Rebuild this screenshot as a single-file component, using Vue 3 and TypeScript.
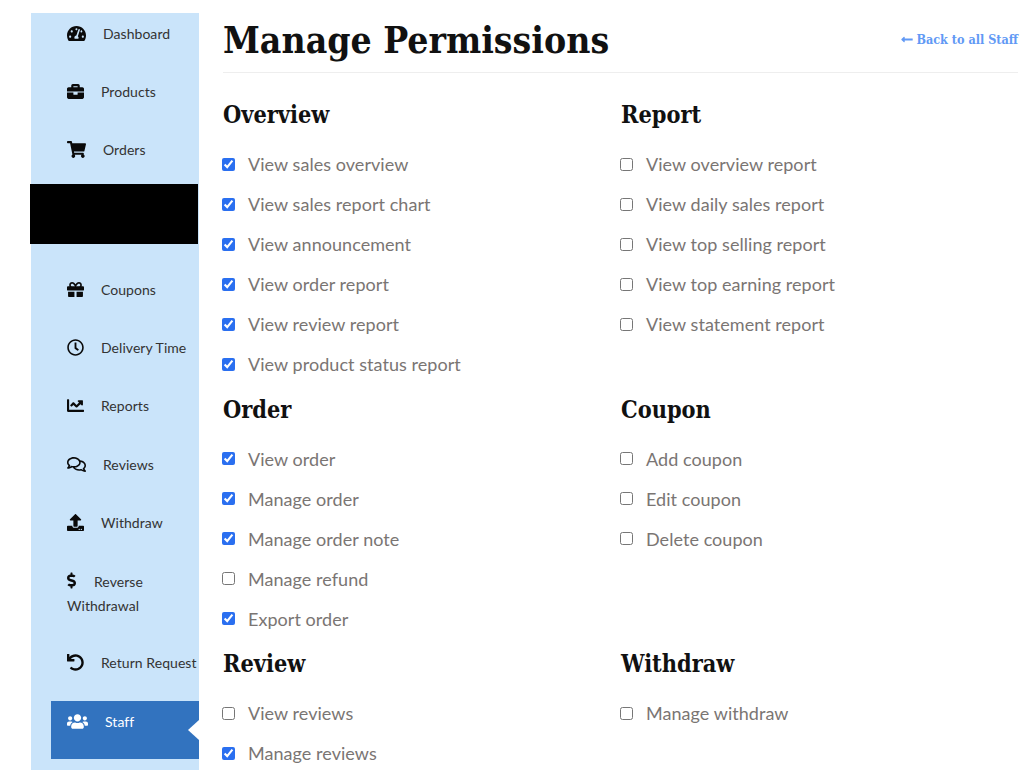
<script setup lang="ts">
interface NavItem {
  label: string
  vb: string
  d: string
  w: number
  cls?: string
}
interface Perm { label: string; on: boolean }
interface Group { title: string; perms: Perm[] }

const nav: NavItem[] = [
  { label: 'Dashboard', vb: '0 0 576 512', w: 19, d: 'M288 32C128.94 32 0 160.94 0 320c0 52.8 14.25 102.26 39.06 144.8 5.61 9.62 16.3 15.2 27.44 15.2h443c11.14 0 21.83-5.58 27.44-15.2C561.75 422.26 576 372.8 576 320c0-159.06-128.94-288-288-288zm0 64c14.71 0 26.58 10.13 30.32 23.65-1.11 2.26-2.64 4.23-3.45 6.67l-9.22 27.67c-5.13 3.49-10.97 6.01-17.64 6.01-17.67 0-32-14.33-32-32S270.33 96 288 96zM96 384c-17.67 0-32-14.33-32-32s14.33-32 32-32 32 14.33 32 32-14.33 32-32 32zm48-160c-17.67 0-32-14.33-32-32s14.33-32 32-32 32 14.33 32 32-14.33 32-32 32zm246.77-72.41l-61.33 184C343.13 347.33 352 364.54 352 384c0 11.72-3.38 22.55-8.88 32H232.88c-5.5-9.45-8.88-20.28-8.88-32 0-33.94 26.5-61.43 59.9-63.59l61.34-184.01c4.17-12.56 17.73-19.45 30.36-15.17 12.57 4.19 19.35 17.79 15.17 30.36zm14.66 57.2l15.52-46.55c3.47-1.29 7.13-2.23 11.05-2.23 17.67 0 32 14.33 32 32s-14.33 32-32 32c-11.38-.01-20.89-6.28-26.57-15.22zM480 384c-17.67 0-32-14.33-32-32s14.33-32 32-32 32 14.33 32 32-14.33 32-32 32z' },
  { label: 'Products', vb: '0 0 512 512', w: 17, d: 'M320 336c0 8.84-7.16 16-16 16h-96c-8.84 0-16-7.16-16-16v-48H0v144c0 25.6 22.4 48 48 48h416c25.6 0 48-22.4 48-48V288H320v48zm144-208h-80V80c0-25.6-22.4-48-48-48H176c-25.6 0-48 22.4-48 48v48H48c-25.6 0-48 22.4-48 48v80h512v-80c0-25.6-22.4-48-48-48zm-144 0H192V96h128v32z' },
  { label: 'Orders', vb: '0 0 576 512', w: 19, d: 'M528.12 301.319l47.273-208C578.806 78.301 567.391 64 551.99 64H159.208l-9.166-44.81C147.758 8.021 137.93 0 126.529 0H24C10.745 0 0 10.745 0 24v16c0 13.255 10.745 24 24 24h69.883l70.248 343.435C147.325 417.1 136 435.222 136 456c0 30.928 25.072 56 56 56s56-25.072 56-56c0-15.674-6.447-29.835-16.824-40h209.647C430.447 426.165 424 440.326 424 456c0 30.928 25.072 56 56 56s56-25.072 56-56c0-22.172-12.888-41.332-31.579-50.405l5.517-24.276c3.413-15.018-8.002-29.319-23.403-29.319H218.117l-6.545-32h293.145c11.206 0 20.92-7.754 23.403-18.681z' }
]
const navLower: NavItem[] = [
  { label: 'Coupons', vb: '0 0 512 512', w: 17, d: 'M32 448c0 17.7 14.3 32 32 32h160V320H32v128zm256 32h160c17.7 0 32-14.3 32-32V320H288v160zm192-320h-42.1c6.2-12.1 10.1-25.5 10.1-40 0-48.5-39.5-88-88-88-41.6 0-68.5 21.3-103 68.3-34.5-47-61.4-68.3-103-68.3-48.5 0-88 39.5-88 88 0 14.5 3.8 27.9 10.1 40H32c-17.7 0-32 14.3-32 32v80c0 8.8 7.2 16 16 16h480c8.8 0 16-7.2 16-16v-80c0-17.7-14.3-32-32-32zm-326.1 0c-22.1 0-40-17.9-40-40s17.9-40 40-40c19.9 0 34.6 3.3 86.1 80h-86.1zm206.1 0h-86.1c51.4-76.5 65.7-80 86.1-80 22.1 0 40 17.9 40 40s-17.9 40-40 40z' },
  { label: 'Delivery Time', vb: '0 0 512 512', w: 17, d: 'M256 8C119 8 8 119 8 256s111 248 248 248 248-111 248-248S393 8 256 8zm0 448c-110.5 0-200-89.5-200-200S145.5 56 256 56s200 89.5 200 200-89.5 200-200 200zm61.8-104.4l-84.9-61.7c-3.1-2.3-4.9-5.9-4.9-9.7V116c0-6.6 5.4-12 12-12h32c6.6 0 12 5.4 12 12v141.7l66.8 48.6c5.4 3.9 6.5 11.4 2.6 16.8L334.6 349c-3.9 5.3-11.4 6.5-16.8 2.6z' },
  { label: 'Reports', vb: '0 0 512 512', w: 17, d: 'M496 384H64V80c0-8.84-7.16-16-16-16H16C7.16 64 0 71.16 0 80v336c0 17.67 14.33 32 32 32h464c8.84 0 16-7.16 16-16v-32c0-8.84-7.16-16-16-16zM464 96H345.94c-21.38 0-32.09 25.85-16.97 40.97l32.4 32.4L288 242.75l-73.37-73.37c-12.5-12.5-32.76-12.5-45.25 0l-68.69 68.69c-6.25 6.25-6.25 16.38 0 22.63l22.62 22.62c6.25 6.25 16.38 6.25 22.63 0L192 237.25l73.37 73.37c12.5 12.5 32.76 12.5 45.25 0l96-96 32.4 32.4c15.12 15.12 40.97 4.41 40.97-16.97V112c.01-8.84-7.15-16-15.99-16z' },
  { label: 'Reviews', vb: '0 0 576 512', w: 19, d: 'M532 386.2c27.5-27.1 44-61.1 44-98.2 0-80-76.5-146.1-176.2-157.9C368.3 72.5 294.3 32 208 32 93.1 32 0 103.6 0 192c0 37 16.5 71 44 98.2-15.3 30.7-37.3 54.5-37.7 54.9-6.3 6.7-8.1 16.5-4.4 25 3.6 8.5 12 14 21.2 14 53.5 0 96.7-20.2 125.2-38.8 9.2 2.1 18.7 3.7 28.4 4.9C208.1 407.6 281.8 448 368 448c20.8 0 40.8-2.4 59.8-6.8C456.3 459.7 499.4 480 553 480c9.2 0 17.5-5.5 21.2-14 3.6-8.5 1.9-18.3-4.4-25-.4-.3-22.5-24.1-37.8-54.8zm-392.8-92.3L122.1 305c-14.1 9.1-28.5 16.3-43.1 21.4 2.7-4.7 5.4-9.7 8-14.8l15.5-31.1L77.7 256C64.2 242.6 48 220.7 48 192c0-60.7 73.3-112 160-112s160 51.3 160 112-73.3 112-160 112c-16.5 0-33-1.9-49-5.6l-19.8-4.5zM498.3 352l-24.7 24.4 15.5 31.1c2.6 5.1 5.3 10.1 8 14.8-14.6-5.1-29-12.3-43.1-21.4l-17.1-11.1-19.9 4.6c-16 3.7-32.5 5.6-49 5.6-54 0-102.2-20.1-131.3-49.7C338 339.5 416 272.9 416 192c0-3.4-.4-6.7-.7-10C479.7 196.5 528 238.8 528 288c0 28.7-16.2 50.6-29.7 64z' },
  { label: 'Withdraw', vb: '0 0 512 512', w: 17, d: 'M296 384h-80c-13.3 0-24-10.7-24-24V192h-87.7c-17.8 0-26.7-21.5-14.1-34.1L242.3 5.7c7.5-7.5 19.8-7.5 27.3 0l152.2 152.2c12.6 12.6 3.7 34.1-14.1 34.1H320v168c0 13.3-10.7 24-24 24zm216-8v112c0 13.3-10.7 24-24 24H24c-13.3 0-24-10.7-24-24V376c0-13.3 10.7-24 24-24h136v8c0 30.9 25.1 56 56 56h80c30.9 0 56-25.1 56-56v-8h136c13.3 0 24 10.7 24 24zm-124 88c0-11-9-20-20-20s-20 9-20 20 9 20 20 20 20-9 20-20zm64 0c0-11-9-20-20-20s-20 9-20 20 9 20 20 20 20-9 20-20z' },
  { label: 'Reverse Withdrawal', vb: '0 0 320 512', w: 10, cls: 'two-line', d: 'M209.2 233.4l-108-31.6C88.7 198.2 80 186.5 80 173.5c0-16.3 13.2-29.5 29.5-29.5h66.3c12.2 0 24.2 3.7 34.2 10.5 6.1 4.1 14.3 3.1 19.5-2l34.8-34c7.1-6.9 6.1-18.4-1.8-24.5C238 74.8 207.4 64.1 176 64V16c0-8.8-7.2-16-16-16h-32c-8.8 0-16 7.2-16 16v48h-2.5C45.8 64-5.4 118.7.5 183.6c4.2 46.1 39.4 83.6 83.8 96.6l102.5 30c12.5 3.7 21.2 15.3 21.2 28.3 0 16.3-13.2 29.5-29.5 29.5h-66.3C100 368 88 364.3 78 357.5c-6.1-4.1-14.3-3.1-19.5 2l-34.8 34c-7.1 6.9-6.1 18.4 1.8 24.5 24.5 19.2 55.1 29.9 86.5 30v48c0 8.8 7.2 16 16 16h32c8.8 0 16-7.2 16-16v-48.2c46.6-.9 90.3-28.6 105.7-72.7 21.5-61.6-14.6-124.8-72.5-141.7z' },
  { label: 'Return Request', vb: '0 0 512 512', w: 17, d: 'M212.333 224.333H12c-6.627 0-12-5.373-12-12V12C0 5.373 5.373 0 12 0h48c6.627 0 12 5.373 12 12v78.112C117.773 39.279 184.26 7.47 258.175 8.007c136.906.994 246.448 111.623 246.157 248.532C504.041 393.258 393.12 504 256.333 504c-64.089 0-122.496-24.313-166.51-64.215-5.099-4.622-5.334-12.554-.467-17.42l33.967-33.967c4.474-4.474 11.662-4.717 16.401-.525C170.76 415.336 211.58 432 256.333 432c97.268 0 176-78.716 176-176 0-97.267-78.716-176-176-176-58.496 0-110.28 28.476-142.274 72.333h98.274c6.627 0 12 5.373 12 12v48c0 6.627-5.373 12-12 12z' }
]
const staffIcon = 'M96 224c35.3 0 64-28.7 64-64s-28.7-64-64-64-64 28.7-64 64 28.7 64 64 64zm448 0c35.3 0 64-28.7 64-64s-28.7-64-64-64-64 28.7-64 64 28.7 64 64 64zm32 32h-64c-17.6 0-33.5 7.1-45.1 18.6 40.3 22.1 68.9 62 75.1 109.4h66c17.7 0 32-14.3 32-32v-32c0-35.3-28.7-64-64-64zm-256 0c61.9 0 112-50.1 112-112S381.9 32 320 32 208 82.1 208 144s50.1 112 112 112zm76.8 32h-8.3c-20.8 10-43.9 16-68.5 16s-47.6-6-68.5-16h-8.3C179.6 288 128 339.6 128 403.2V432c0 26.5 21.5 48 48 48h288c26.5 0 48-21.5 48-48v-28.8c0-63.6-51.6-115.2-115.2-115.2zm-223.7-13.4C161.5 263.1 145.6 256 128 256H64c-35.3 0-64 28.7-64 64v32c0 17.7 14.3 32 32 32h65.9c6.3-47.4 34.9-87.3 75.2-109.4z'
const arrowIcon = 'M134.059 296H436c6.627 0 12-5.373 12-12v-56c0-6.627-5.373-12-12-12H134.059v-46.059c0-21.382-25.851-32.09-40.971-16.971L7.029 239.029c-9.373 9.373-9.373 24.569 0 33.941l86.059 86.059c15.119 15.119 40.971 4.411 40.971-16.971V296z'

const mk = (s: string): Perm[] => s.split('|').map((x) => {
  const off = x.startsWith('!')
  return { label: off ? x.slice(1) : x, on: !off }
})
const groups: Group[] = [
  { title: 'Overview', perms: mk('View sales overview|View sales report chart|View announcement|View order report|View review report|View product status report') },
  { title: 'Report', perms: mk('!View overview report|!View daily sales report|!View top selling report|!View top earning report|!View statement report') },
  { title: 'Order', perms: mk('View order|Manage order|Manage order note|!Manage refund|Export order') },
  { title: 'Coupon', perms: mk('!Add coupon|!Edit coupon|!Delete coupon') },
  { title: 'Review', perms: mk('!View reviews|Manage reviews') },
  { title: 'Withdraw', perms: mk('!Manage withdraw') }
]
</script>

<template>
  <div class="page">
    <aside class="sidebar">
      <a v-for="n in nav" :key="n.label" class="nav-item">
        <svg class="nav-icon" :viewBox="n.vb" :width="n.w" height="17" fill="currentColor"><path :d="n.d" /></svg>
        <span class="nav-label">{{ n.label }}</span>
      </a>
      <div class="redacted"></div>
      <a v-for="n in navLower" :key="n.label" class="nav-item lower" :class="n.cls">
        <svg class="nav-icon" :viewBox="n.vb" :width="n.w" height="17" fill="currentColor"><path :d="n.d" /></svg>
        <span class="nav-label">{{ n.label }}</span>
      </a>
      <a class="nav-item active">
        <svg class="nav-icon" viewBox="0 0 640 512" width="21" height="17" fill="currentColor"><path :d="staffIcon" /></svg>
        <span class="nav-label">Staff</span>
      </a>
    </aside>
    <main class="main">
      <header class="head">
        <h1>Manage Permissions</h1>
        <a class="back">
          <svg viewBox="0 0 448 512" width="12" height="13" fill="currentColor"><path :d="arrowIcon" /></svg>
          Back to all Staff
        </a>
      </header>
      <div class="grid">
        <section v-for="g in groups" :key="g.title" class="group">
          <h2>{{ g.title }}</h2>
          <label v-for="p in g.perms" :key="p.label" class="perm">
            <input type="checkbox" :checked="p.on" />
            <span>{{ p.label }}</span>
          </label>
        </section>
      </div>
    </main>
  </div>
</template>

<style>
html, body { margin: 0; background: #fff; overflow: hidden; }
</style>

<style scoped>
.page {
  display: flex;
  align-items: flex-start;
  height: 757px;
  padding: 13px 6px 0 31px;
  overflow: hidden;
  font-family: Lato, "Open Sans", sans-serif;
}
.sidebar {
  width: 168px;
  height: 757px;
  flex: none;
  background: #cae4fa;
  display: flex;
  flex-direction: column;
}
.nav-item {
  display: flex;
  align-items: center;
  box-sizing: border-box;
  height: 58.3px;
  padding: 0 0 18px 36px;
  color: #333;
  font-size: 14px;
  letter-spacing: 0.05px;
  white-space: nowrap;
}
.nav-item.lower { height: 58.4px; }
.nav-icon { flex: none; margin-right: 17px; color: #0a0a0a; }
.nav-item.two-line {
  display: block;
  height: 81.6px;
  padding: 9px 30px 0 36px;
  white-space: normal;
  line-height: 24px;
}
.two-line .nav-icon { vertical-align: -2px; }
.redacted {
  width: 168px;
  height: 60px;
  margin: -4px 0 25px -1px;
  background: #000;
  flex: none;
}
.nav-item.active {
  position: relative;
  margin-left: 20px;
  padding: 0 0 17px 16px;
  background: #3273bf;
  color: #fff;
}
.nav-item.active .nav-icon { color: #fff; }
.nav-item.active::after {
  content: "";
  position: absolute;
  right: 0;
  top: 19px;
  border: 10px solid transparent;
  border-left: 0;
  border-right: 11px solid #fff;
}
.main { flex: 1; margin-left: 24px; min-width: 0; }
.head {
  display: flex;
  justify-content: space-between;
  align-items: center;
  height: 59px;
  border-bottom: 1px solid #eee;
}
h1 {
  margin: -5px 0 0;
  font: 700 37px/1 "DejaVu Serif", "Liberation Serif", serif;
  font-stretch: condensed;
  color: #111;
}
.back {
  margin-top: -6px;
  font: 700 12.5px "DejaVu Serif", "Liberation Serif", serif;
  font-stretch: condensed;
  color: #6199f5;
  display: flex;
  align-items: center;
  gap: 3px;
}
.grid {
  display: grid;
  grid-template-columns: 398px 398px;
  row-gap: 9.5px;
  margin-top: 26px;
}
h2 {
  margin: 0 0 14px;
  padding-top: 1px;
  font: 700 23.3px/30px "DejaVu Serif", "Liberation Serif", serif;
  font-stretch: condensed;
  color: #111;
}
.perm {
  display: flex;
  align-items: center;
  height: 40px;
  color: #7a7573;
  font-size: 18px;
}
.perm span { letter-spacing: 0.05px; }
.perm input {
  width: 13px;
  height: 13px;
  margin: 0 13px 0 -1px;
  flex: none;
  accent-color: #2a6ff0;
}
</style>
